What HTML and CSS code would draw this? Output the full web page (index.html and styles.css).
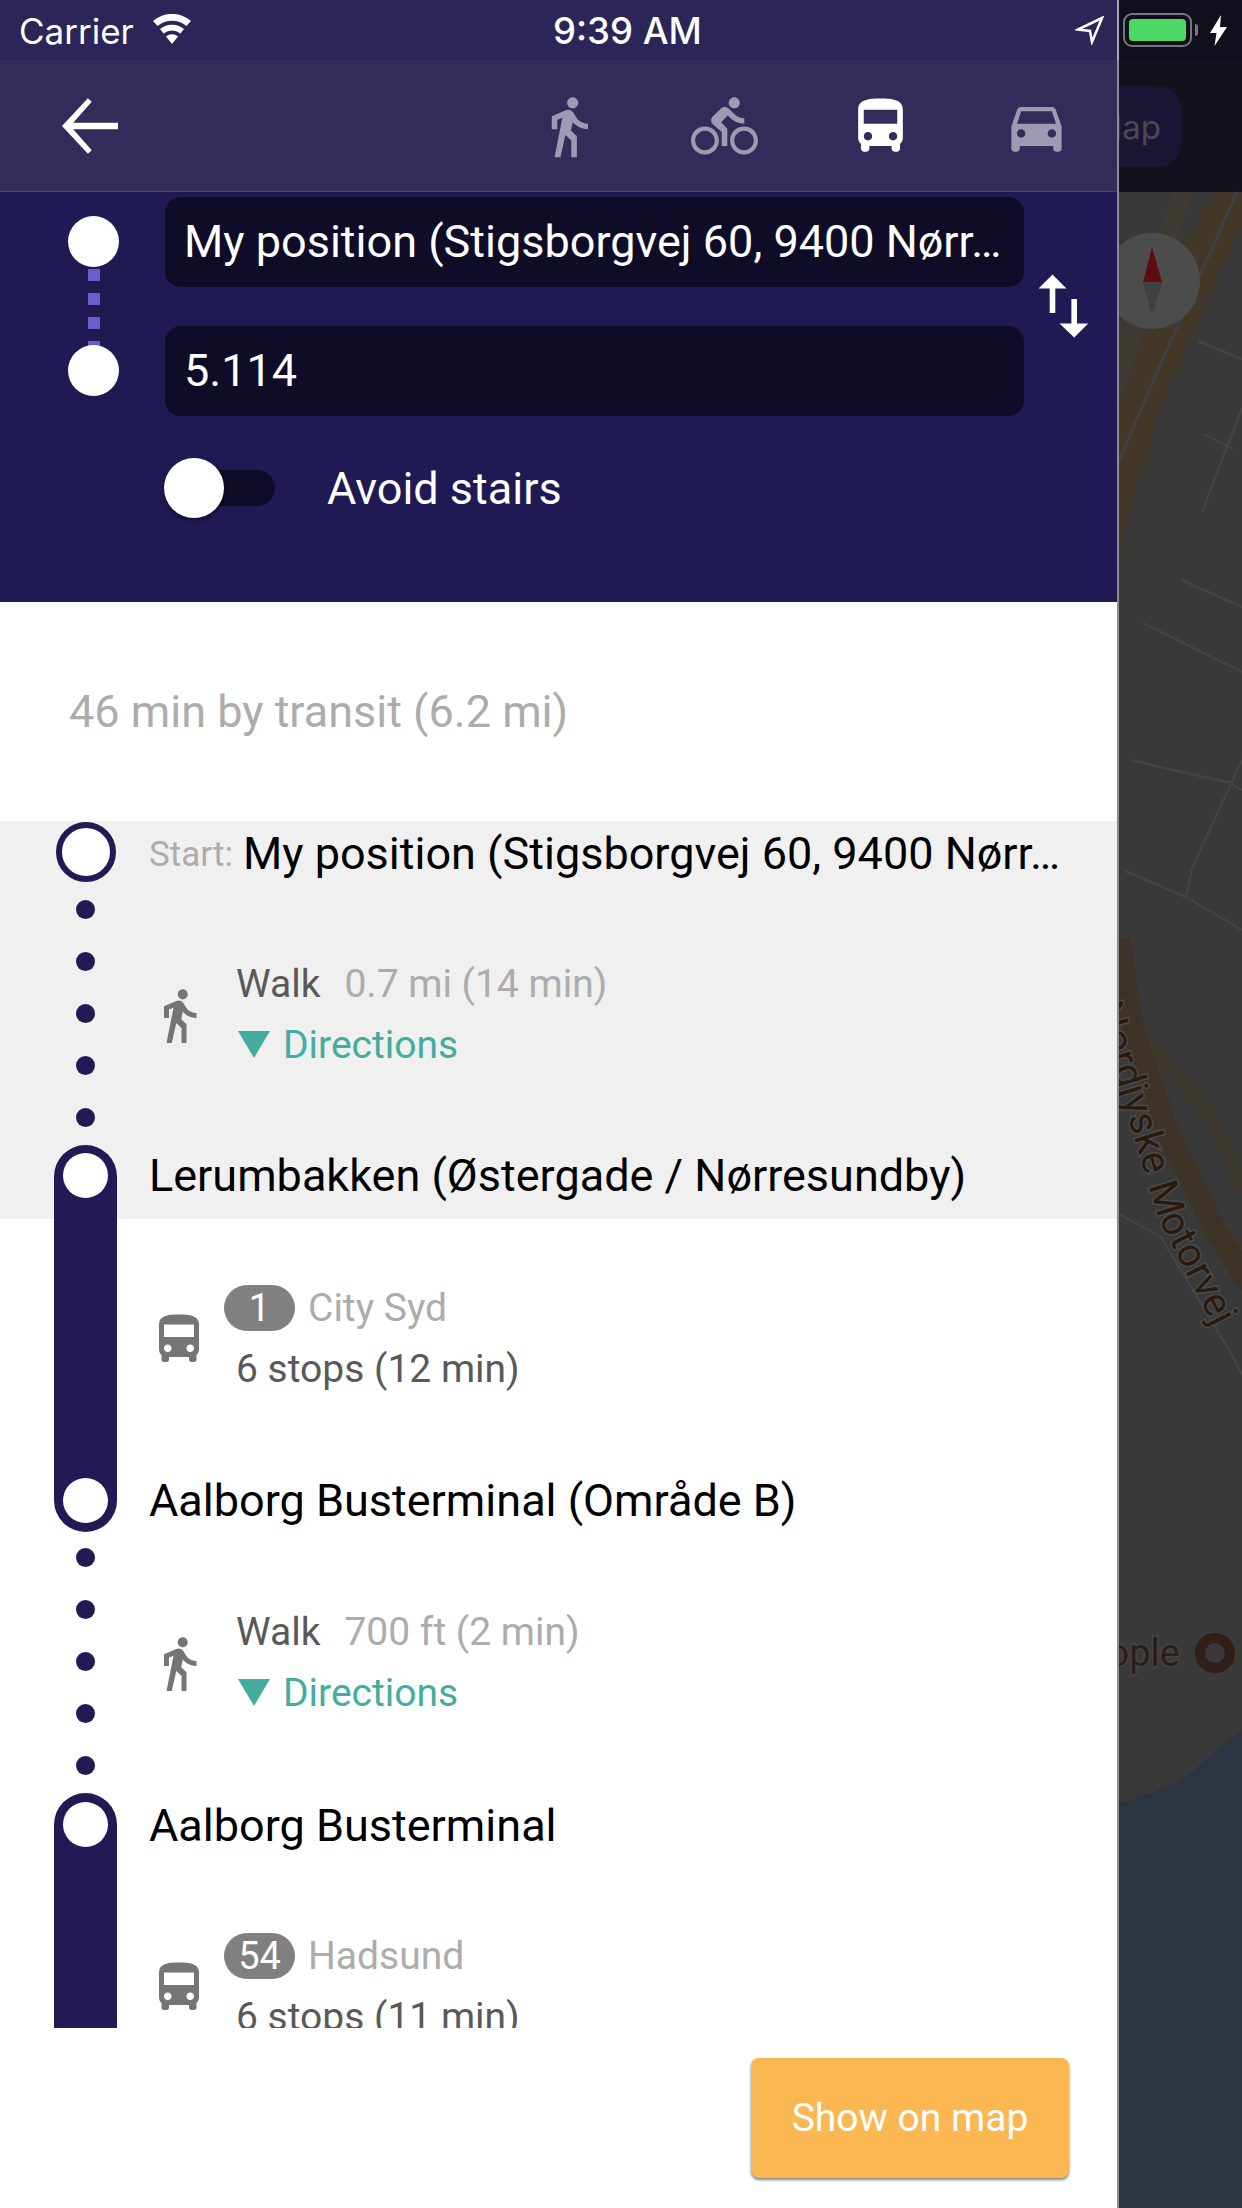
FILE: index.html
```html
<!DOCTYPE html>
<html lang="en">
<head>
    <meta charset="UTF-8">
    <meta name="viewport" content="width=device-width, initial-scale=1.0">
    <title>Route</title>
    <link rel="stylesheet" href="styles.css">
</head>
<body>
<div class="statusbar">
    <div class="status-left">
        <span>Carrier</span>
        <svg class="wifi" width="42" height="30" viewBox="0 0 42 30"><path fill="#fff" d="M21 30 15 22.500a9.500 9.500 0 0 1 12 0zM12.600 19.500 9 15a19 19 0 0 1 24 0l-3.600 4.500a13.500 13.500 0 0 0-16.800 0zM6.500 12 2 7a29 29 0 0 1 38 0l-4.500 5a23 23 0 0 0-29 0z"/></svg>
    </div>
    <span class="status-time">9:39 AM</span>
    <div class="status-right">
        <svg width="29" height="29" viewBox="0 0 29 29"><path fill="none" stroke="#fff" stroke-width="2.500" d="M27 2 3 13.500 15 15 17 26z"/></svg>
        <div class="battery"><div class="battery-level"></div></div>
        <div class="battery-nub"></div>
        <svg width="17" height="31" viewBox="0 0 17 31"><path fill="#fff" d="M11 0 0 18h6.500L4.500 31 17 12h-7z"/></svg>
    </div>
</div>

<div class="screen">
    <div class="drawer">
        <div class="topbar">
            <svg class="back" width="84" height="84" viewBox="0 0 24 24"><path fill="#fff" d="M20 11.100H7.200l5.300-6-1.100-1L4 12l7.400 7.900 1.100-1-5.300-6H20z"/></svg>
            <div class="modes">
                <svg class="mode" width="67" height="67" viewBox="0 0 24 24"><path d="M13.500 5.500c1.100 0 2-.9 2-2s-.9-2-2-2-2 .9-2 2 .9 2 2 2zM9.800 8.900L7 23h2.100l1.800-8 2.100 2v6h2v-7.500l-2.100-2 .6-3C14.800 12 16.800 13 19 13v-2c-1.900 0-3.500-1-4.300-2.400l-1-1.600c-.4-.6-1-1-1.700-1-.3 0-.5.1-.8.1L6 8.300V13h2V9.600l1.800-.7"/></svg>
                <svg class="mode" width="67" height="67" viewBox="0 0 24 24"><path d="M15.500 5.500c1.100 0 2-.9 2-2s-.9-2-2-2-2 .9-2 2 .9 2 2 2zM5 12c-2.800 0-5 2.200-5 5s2.200 5 5 5 5-2.200 5-5-2.200-5-5-5zm0 8.500c-1.900 0-3.500-1.600-3.500-3.500s1.600-3.500 3.500-3.500 3.500 1.600 3.500 3.500-1.600 3.500-3.500 3.500zm5.800-10l2.400-2.400.8.8c1.300 1.300 3 2.100 5.100 2.100V9c-1.500 0-2.700-.6-3.600-1.500l-1.900-1.900c-.5-.4-1-.6-1.600-.6s-1.100.2-1.400.6L7.800 8.400c-.4.4-.6.9-.6 1.400 0 .6.2 1.100.6 1.400L11 14v5h2v-6.200l-2.200-2.300zM19 12c-2.800 0-5 2.200-5 5s2.200 5 5 5 5-2.200 5-5-2.200-5-5-5zm0 8.500c-1.900 0-3.500-1.600-3.500-3.500s1.600-3.500 3.500-3.500 3.500 1.600 3.500 3.500-1.600 3.500-3.500 3.500z"/></svg>
                <svg class="mode mode-active" width="67" height="67" viewBox="0 0 24 24"><path d="M4 16c0 .88.39 1.670 1 2.220V20c0 .55.45 1 1 1h1c.55 0 1-.45 1-1v-1h8v1c0 .55.45 1 1 1h1c.55 0 1-.45 1-1v-1.780c.61-.55 1-1.340 1-2.220V6c0-3.500-3.580-4-8-4s-8 .5-8 4v10zm3.500 1c-.83 0-1.500-.67-1.500-1.500S6.670 14 7.500 14s1.500.67 1.500 1.500S8.330 17 7.500 17zm9 0c-.83 0-1.500-.67-1.500-1.500s.67-1.500 1.500-1.500 1.500.67 1.500 1.500-.67 1.500-1.500 1.500zm1.500-6H6V6h12v5z"/></svg>
                <svg class="mode" width="67" height="67" viewBox="0 0 24 24"><path d="M18.920 6.010C18.720 5.420 18.160 5 17.500 5h-11c-.66 0-1.210.42-1.420 1.010L3 12v8c0 .55.45 1 1 1h1c.55 0 1-.45 1-1v-1h12v1c0 .55.45 1 1 1h1c.55 0 1-.45 1-1v-8l-2.080-5.990zM6.500 16c-.83 0-1.500-.67-1.500-1.500S5.670 13 6.500 13s1.500.67 1.500 1.500S7.330 16 6.500 16zm11 0c-.83 0-1.500-.67-1.500-1.500s.67-1.500 1.500-1.500 1.500.67 1.500 1.500-.67 1.500-1.500 1.500zM5 11l1.500-4.500h11L19 11H5z"/></svg>
            </div>
        </div>

        <div class="search">
            <div class="places">
                <div class="place-dots">
                    <div class="place-dot"></div>
                    <div class="place-line"></div>
                    <div class="place-dot"></div>
                </div>
                <div class="place-inputs">
                    <div class="place-input">My position (Stigsborgvej 60, 9400 Nørr…</div>
                    <div class="place-input">5.114</div>
                </div>
                <svg class="swap" width="84" height="84" viewBox="0 0 24 24"><path fill="#fff" d="M16 17.010V10h-1.600v7.010h-3.400L15.200 21l4-3.990h-3.200zM9 3L5 6.990h3.200V14h1.600V6.990H13L9 3z"/></svg>
            </div>
            <div class="option">
                <div class="toggle">
                    <div class="toggle-knob"></div>
                    <div class="toggle-track"></div>
                </div>
                <span>Avoid stairs</span>
            </div>
        </div>

        <div class="summary">46 min by transit (6.2 mi)</div>

        <div class="route">
            <div class="stop stop-start is-active">
                <div class="rail"><div class="start-ring"></div></div>
                <span class="stop-label">Start:</span>
                <span class="stop-name">My position (Stigsborgvej 60, 9400 Nørr…</span>
            </div>
            <div class="leg leg-first is-active">
                <div class="rail rail-dots">
                    <i></i><i></i><i></i><i></i><i></i>
                </div>
                <div class="leg-icon">
                    <svg width="65" height="65" viewBox="0 0 24 24"><path d="M13.500 5.500c1.100 0 2-.9 2-2s-.9-2-2-2-2 .9-2 2 .9 2 2 2zM9.800 8.900L7 23h2.100l1.800-8 2.100 2v6h2v-7.500l-2.100-2 .6-3C14.800 12 16.800 13 19 13v-2c-1.900 0-3.500-1-4.300-2.400l-1-1.600c-.4-.6-1-1-1.700-1-.3 0-.5.1-.8.1L6 8.300V13h2V9.600l1.800-.7"/></svg>
                </div>
                <div class="leg-text">
                    <div class="leg-line"><span class="leg-title">Walk</span><span class="leg-meta">0.7 mi (14 min)</span></div>
                    <div class="leg-line leg-link"><i class="caret"></i>Directions</div>
                </div>
            </div>
            <div class="stop is-active">
                <div class="rail"><div class="pill pill-top"><div class="pill-hole"></div></div></div>
                <span class="stop-name">Lerumbakken (Østergade / Nørresundby)</span>
            </div>
            <div class="leg leg-bus">
                <div class="rail rail-solid"></div>
                <div class="leg-icon">
                    <svg width="63" height="63" viewBox="0 0 24 24"><path d="M4 16c0 .88.39 1.670 1 2.220V20c0 .55.45 1 1 1h1c.55 0 1-.45 1-1v-1h8v1c0 .55.45 1 1 1h1c.55 0 1-.45 1-1v-1.780c.61-.55 1-1.340 1-2.220V6c0-3.500-3.580-4-8-4s-8 .5-8 4v10zm3.500 1c-.83 0-1.500-.67-1.500-1.500S6.670 14 7.500 14s1.500.67 1.500 1.500S8.330 17 7.500 17zm9 0c-.83 0-1.500-.67-1.500-1.500s.67-1.500 1.500-1.500 1.500.67 1.500 1.500-.67 1.500-1.500 1.500zm1.500-6H6V6h12v5z"/></svg>
                </div>
                <div class="leg-text">
                    <div class="leg-line leg-line-badge"><span class="badge">1</span><span class="leg-dest">City Syd</span></div>
                    <div class="leg-line leg-title">6 stops (12 min)</div>
                </div>
            </div>
            <div class="stop">
                <div class="rail"><div class="pill pill-bottom"><div class="pill-hole"></div></div></div>
                <span class="stop-name">Aalborg Busterminal (Område B)</span>
            </div>
            <div class="leg leg-walk">
                <div class="rail rail-dots">
                    <i></i><i></i><i></i><i></i><i></i>
                </div>
                <div class="leg-icon">
                    <svg width="65" height="65" viewBox="0 0 24 24"><path d="M13.500 5.500c1.100 0 2-.9 2-2s-.9-2-2-2-2 .9-2 2 .9 2 2 2zM9.800 8.900L7 23h2.100l1.800-8 2.100 2v6h2v-7.500l-2.100-2 .6-3C14.800 12 16.800 13 19 13v-2c-1.900 0-3.500-1-4.300-2.400l-1-1.600c-.4-.6-1-1-1.700-1-.3 0-.5.1-.8.1L6 8.300V13h2V9.600l1.800-.7"/></svg>
                </div>
                <div class="leg-text">
                    <div class="leg-line"><span class="leg-title">Walk</span><span class="leg-meta">700 ft (2 min)</span></div>
                    <div class="leg-line leg-link"><i class="caret"></i>Directions</div>
                </div>
            </div>
            <div class="stop">
                <div class="rail"><div class="pill pill-top pill-full"><div class="pill-hole"></div></div></div>
                <span class="stop-name">Aalborg Busterminal</span>
            </div>
            <div class="leg leg-last">
                <div class="rail rail-solid"></div>
                <div class="leg-icon">
                    <svg width="63" height="63" viewBox="0 0 24 24"><path d="M4 16c0 .88.39 1.670 1 2.220V20c0 .55.45 1 1 1h1c.55 0 1-.45 1-1v-1h8v1c0 .55.45 1 1 1h1c.55 0 1-.45 1-1v-1.780c.61-.55 1-1.340 1-2.220V6c0-3.500-3.580-4-8-4s-8 .5-8 4v10zm3.500 1c-.83 0-1.500-.67-1.500-1.500S6.670 14 7.500 14s1.500.67 1.500 1.500S8.330 17 7.500 17zm9 0c-.83 0-1.500-.67-1.500-1.500s.67-1.500 1.500-1.500 1.500.67 1.500 1.500-.67 1.500-1.500 1.500zm1.500-6H6V6h12v5z"/></svg>
                </div>
                <div class="leg-text">
                    <div class="leg-line leg-line-badge"><span class="badge">54</span><span class="leg-dest">Hadsund</span></div>
                    <div class="leg-line leg-title">6 stops (11 min)</div>
                </div>
            </div>
        </div>

        <div class="footer">
            <div class="map-button">Show on map</div>
        </div>
    </div>

    <div class="map">
        <svg class="map-canvas" viewBox="1119 60 123 2148" width="123" height="2148">
            <rect x="1119" y="60" width="123" height="132" fill="#12111c"/>
            <path d="M1100 86h58a23 23 0 0 1 23 23v35a23 23 0 0 1-23 23h-58z" fill="#1c1636"/>
            <text class="map-btn-text" x="1161" y="139" text-anchor="end">Map</text>
            <rect x="1119" y="192" width="123" height="2016" fill="#393939"/>

            <path d="M1173 192H1193L1147 332 1119 400V350z" fill="#3f3b34"/>
            <path d="M1213 192H1242V221L1162 404 1130 506 1119 564V404L1127 386 1150 310z" fill="#433727"/>
            <path d="M1237 192 1147 395 1119 462" fill="none" stroke="#3f4143" stroke-width="3"/>

            <g fill="none" stroke="#444" stroke-width="2.500">
                <path d="M1198 341 1242 359"/>
                <path d="M1204 434 1233 449"/>
                <path d="M1242 408 1202 512"/>
                <path d="M1182 580 1242 607"/>
                <path d="M1143 623 1242 672"/>
                <path d="M1130 760 1230 783 1242 790"/>
                <path d="M1242 760 1192 868 1186 897"/>
                <path d="M1125 871 1186 897 1242 930"/>
                <path d="M1119 1214 1161 1237 1235 1360 1242 1375"/>
            </g>

            <path d="M1140 1030 1213 1120 1242 1190" fill="none" stroke="#3d3931" stroke-width="15"/>
            <path d="M1119 939 1133 1028 1167 1130 1217 1233 1250 1285" fill="none" stroke="#3c3225" stroke-width="22"/>
            <path id="motorway" d="M1094 1006 1124 1104 1159 1220 1222 1343 1260 1410" fill="none"/>
            <text class="map-road-text"><textPath href="#motorway">Nordjyske Motorvej</textPath></text>

            <text class="map-place-text" x="1180" y="1666" text-anchor="end">People</text>
            <circle cx="1215" cy="1653" r="15" fill="none" stroke="#2f1f17" stroke-width="10"/>

            <path d="M1119 1803 1133 1800 1181 1781 1200 1765 1222 1746 1235 1735 1242 1731V2208H1119z" fill="#2b3440"/>

            <g class="compass">
                <circle cx="1152" cy="281" r="48" fill="#4c4c4c"/>
                <path d="M1152 247 1143 282H1162z" fill="#5f0c0c"/>
                <path d="M1143 282H1162L1152 316z" fill="#404040"/>
            </g>
        </svg>
    </div>
</div>
</body>
</html>
```

FILE: styles.css
```css
* {
    box-sizing: border-box;
}
body {
    margin: 0;
    width: 1242px;
    height: 2208px;
    overflow: hidden;
    font-family: Roboto, sans-serif;
    background-color: #fff;
}

/* status bar runs over both the drawer and the dimmed map */
.statusbar {
    height: 60px;
    display: flex;
    align-items: center;
    position: relative;
    padding-top: 2px;
    font-family: Inter, sans-serif;
    font-size: 35px;
    color: #fff;
    background: linear-gradient(to right, #2b2558 1117px, #a8a8ac 1117px, #a8a8ac 1119px, #10101c 1119px);
}
.status-left {
    display: flex;
    align-items: center;
    gap: 17px;
    padding-left: 19px;
}
.wifi {
    margin-top: -4px;
}
.status-time {
    position: absolute;
    left: 553px;
    font-size: 36.5px;
    font-weight: 500;
}
.status-right {
    position: absolute;
    left: 1075px;
    top: 13px;
    display: flex;
    align-items: center;
}
.battery {
    width: 69px;
    height: 34px;
    margin-left: 19px;
    padding: 4px;
    border: 2px solid #77777d;
    border-radius: 9px;
}
.battery-level {
    height: 100%;
    background-color: #4cd964;
    border-radius: 4px;
}
.battery-nub {
    width: 3px;
    height: 12px;
    margin: 0 12px 0 3px;
    background-color: #77777d;
    border-radius: 0 3px 3px 0;
}

.screen {
    display: flex;
    height: 2148px;
}
.drawer {
    width: 1117px;
    flex: none;
    display: flex;
    flex-direction: column;
}
.map {
    flex: 1;
    position: relative;
    border-left: 2px solid #8b8b90;
}
.map-canvas {
    position: absolute;
    left: 0;
    top: 0;
    display: block;
}
.map-btn-text {
    font-family: Inter, sans-serif;
    font-size: 33px;
    fill: #4b4a50;
}
.map-road-text {
    font-size: 40px;
    fill: #2b1a0b;
    stroke: #4a4a4a;
    stroke-width: 3px;
    paint-order: stroke;
}
.map-place-text {
    font-size: 38px;
    fill: #2c1e16;
    stroke: #444;
    stroke-width: 3px;
    paint-order: stroke;
}

/* header */
.topbar {
    height: 132px;
    flex: none;
    display: flex;
    align-items: center;
    justify-content: space-between;
    padding: 0 47px 0 48px;
    background-color: #322c5b;
    border-bottom: 1px solid #4a4574;
}
.modes {
    display: flex;
    gap: 89px;
    margin-top: 1px;
}
.mode {
    fill: #9d9ab1;
}
.mode-active {
    fill: #fff;
}

/* search form */
.search {
    height: 410px;
    flex: none;
    padding-top: 5px;
    background-color: #201a54;
}
.places {
    display: flex;
    align-items: flex-start;
}
.place-dots {
    width: 51px;
    margin: 19px 0 0 68px;
    display: flex;
    flex-direction: column;
    align-items: center;
}
.place-dot {
    width: 51px;
    height: 51px;
    background-color: #fff;
    border-radius: 50%;
}
.place-line {
    width: 12px;
    height: 78px;
    margin-top: 2px;
    margin-bottom: -2px;
    background: repeating-linear-gradient(to bottom, #6c5bc8 0, #6c5bc8 12px, transparent 12px, transparent 24px);
}
.place-inputs {
    width: 859px;
    margin-left: 46px;
    display: flex;
    flex-direction: column;
    gap: 39px;
}
.place-input {
    height: 90px;
    line-height: 90px;
    padding-left: 19px;
    font-size: 45px;
    color: #fff;
    white-space: nowrap;
    background-color: #0e0c27;
    border-radius: 16px;
}
.swap {
    margin: 67px 0 0 -3px;
}
.option {
    display: flex;
    align-items: center;
    gap: 52px;
    margin: 42px 0 0 164px;
    font-size: 45px;
    color: #fff;
}
.toggle {
    width: 111px;
    display: flex;
    align-items: center;
}
.toggle-knob {
    width: 60px;
    height: 60px;
    flex: none;
    position: relative;
    background-color: #fff;
    border-radius: 50%;
    box-shadow: 0 2px 4px rgba(0, 0, 0, 0.5);
}
.toggle-track {
    width: 81px;
    height: 36px;
    flex: none;
    margin-left: -30px;
    background-color: #0e0c27;
    border-radius: 18px;
}

.summary {
    height: 219px;
    flex: none;
    display: flex;
    align-items: center;
    padding-left: 69px;
    font-size: 45px;
    color: #acacac;
}

/* timeline */
.route {
    height: 1207px;
    flex: none;
    overflow: hidden;
}
.is-active {
    background-color: #f0f0f0;
}
.rail {
    width: 63px;
    flex: none;
    margin: 0 32px 0 54px;
    display: flex;
    flex-direction: column;
    align-items: center;
}
.stop {
    height: 88px;
    display: flex;
    align-items: center;
    white-space: nowrap;
}
.stop-start {
    height: 66px;
    padding-bottom: 2px;
}
.stop-name {
    font-size: 45px;
    color: #000;
}
.stop-label {
    margin: 2px 10px 0 0;
    font-size: 35px;
    color: #acacac;
}
.start-ring {
    width: 60px;
    height: 60px;
    margin-bottom: 2px;
    background-color: #fff;
    border: 6px solid #211a55;
    border-radius: 50%;
}
.pill {
    width: 63px;
    align-self: flex-start;
    background-color: #211a55;
}
.pill-top {
    height: 74px;
    margin-top: 14px;
    padding-top: 8px;
    border-radius: 32px 32px 0 0;
}
.pill-full {
    height: 76px;
    margin-top: 12px;
    padding-top: 9px;
}
.pill-bottom {
    height: 76px;
    margin-bottom: 12px;
    padding-top: 22px;
    border-radius: 0 0 32px 32px;
}
.pill-hole {
    width: 45px;
    height: 45px;
    margin: 0 auto;
    background-color: #fff;
    border-radius: 50%;
}
.leg {
    height: 237px;
    display: flex;
}
.leg-first {
    --text-top: 66px;
    --icon-top: 96px;
    height: 244px;
}
.leg-bus {
    --text-top: 58px;
    --icon-top: 89px;
}
.leg-walk {
    --text-top: 57px;
    --icon-top: 87px;
}
.leg-last {
    --text-top: 56px;
    --icon-top: 87px;
    height: 300px;
}
.rail-dots {
    gap: 33px;
    padding-top: 4px;
}
.leg-first .rail-dots {
    padding-top: 13px;
}
.rail-dots i {
    width: 19px;
    height: 19px;
    flex: none;
    background-color: #211a55;
    border-radius: 50%;
}
.rail-solid {
    background-color: #211a55;
}
.leg-icon {
    width: 60px;
    flex: none;
    display: flex;
    justify-content: center;
    align-items: flex-start;
    margin-right: 27px;
    padding-top: var(--icon-top);
    fill: #757575;
}
.leg-text {
    padding-top: var(--text-top);
}
.leg-line {
    height: 61px;
    display: flex;
    align-items: center;
    font-size: 39px;
    white-space: nowrap;
}
.leg-line-badge {
    margin-left: -12px;
}
.leg-title {
    color: #595959;
}
.leg-meta {
    margin-left: 24px;
    color: #acacac;
}
.leg-dest {
    margin-left: 13px;
    color: #acacac;
}
.leg-link {
    color: #44ada0;
}
.caret {
    width: 0;
    height: 0;
    margin: 0 13px 0 2px;
    border-left: 16px solid transparent;
    border-right: 16px solid transparent;
    border-top: 27px solid #44ada0;
}
.badge {
    width: 71px;
    height: 46px;
    display: flex;
    align-items: center;
    justify-content: center;
    font-size: 38px;
    color: #fff;
    background-color: #808080;
    border-radius: 23px;
}

.footer {
    flex: 1;
    display: flex;
    justify-content: flex-end;
    padding: 30px 48px 0 0;
    background-color: #fff;
}
.map-button {
    width: 318px;
    height: 120px;
    display: flex;
    align-items: center;
    justify-content: center;
    font-size: 39px;
    color: #fff;
    background-color: #fbb752;
    border-radius: 8px;
    box-shadow: 0 2px 3px rgba(0, 0, 0, 0.5);
}
```
